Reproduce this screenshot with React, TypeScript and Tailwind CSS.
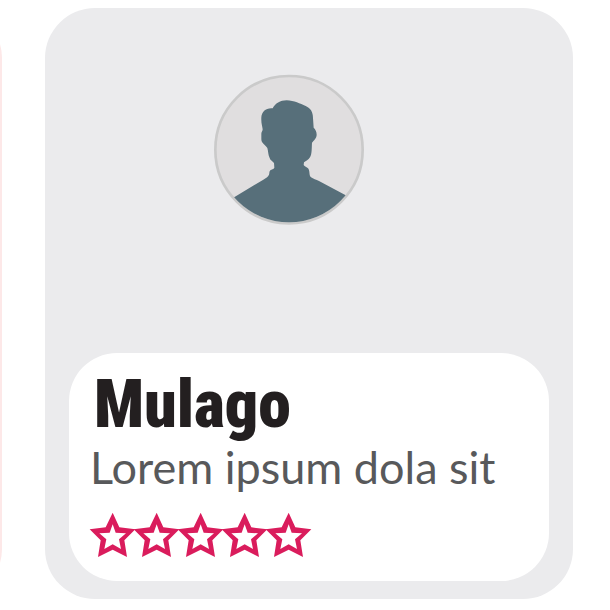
const STARS = [1, 2, 3, 4, 5];

function Avatar() {
  return (
    <svg viewBox="0 0 540 540" className="size-[180px]" role="img" aria-label="Mulago profile picture">
      <defs>
        <clipPath id="avatar-disc">
          <circle cx="267" cy="269" r="218" />
        </clipPath>
      </defs>
      <circle cx="267" cy="269" r="221" fill="#e0dedf" stroke="#cacaca" strokeWidth="8" />
      <path
        clipPath="url(#avatar-disc)"
        fill="#576f7a"
        d="M218 145C226 130 240 121 260 121C283 122 300 131 317 138C332 145 339 156 339 174L341 203C346 207 350 215 350 224C350 235 341 241 336 248C335 265 336 282 330 292C325 300 318 303 312 307L311 315C313 320 324 321 326 328C330 337 327 347 333 352C340 357 348 359 357 363L440 407V500H95V416L190 359C198 354 204 351 207 344C209 340 207 334 211 331C215 328 221 328 223 323L222 309C219 304 211 302 209 294C204 284 205 274 202 264C197 256 184 250 184 238V221C184 216 188 213 188 208C187 198 183 190 184 172C185 155 198 143 218 145Z"
      />
    </svg>
  );
}

function Star() {
  return (
    <svg viewBox="0 0 132 132" className="h-11 w-11 shrink-0 overflow-visible" aria-hidden="true">
      <path
        fill="#da1c5c"
        fillRule="evenodd"
        d="M68 -1L88 43L136 49L103 82L111 132L68 110L24 132L32 82L-1 49L47 43ZM68 34L59 59L28 61L49 79L43 108L68 94L93 108L87 79L108 61L77 59Z"
      />
    </svg>
  );
}

export default function App() {
  return (
    <main className="flex gap-[43px] overflow-hidden bg-white py-2 pr-[37px]">
      <div className="-ml-[calc(100%+35px)] w-[calc(100%+37px)] shrink-0 rounded-[50px] bg-[#fde8e8]" />
      <article className="flex min-w-0 flex-1 flex-col rounded-[50px] bg-[#ebebed] px-6 pt-[52px] pb-[18px]">
        <div className="flex justify-center pr-[38px]">
          <Avatar />
        </div>
        <section className="mt-[113px] rounded-[48px] bg-white px-[21px] pt-4 pb-6">
          <h2 className="pl-1 font-['Roboto_Condensed',sans-serif] text-[66px] leading-[72px] font-black text-[#231f20]">
            Mulago
          </h2>
          <p className="font-['Lato',sans-serif] text-[45px] leading-[52px] whitespace-nowrap text-[#58595b]">
            Lorem ipsum dola sit
          </p>
          <div className="mt-5 flex" role="img" aria-label="Rating, five stars">
            {STARS.map((star) => (
              <Star key={star} />
            ))}
          </div>
        </section>
      </article>
    </main>
  );
}
